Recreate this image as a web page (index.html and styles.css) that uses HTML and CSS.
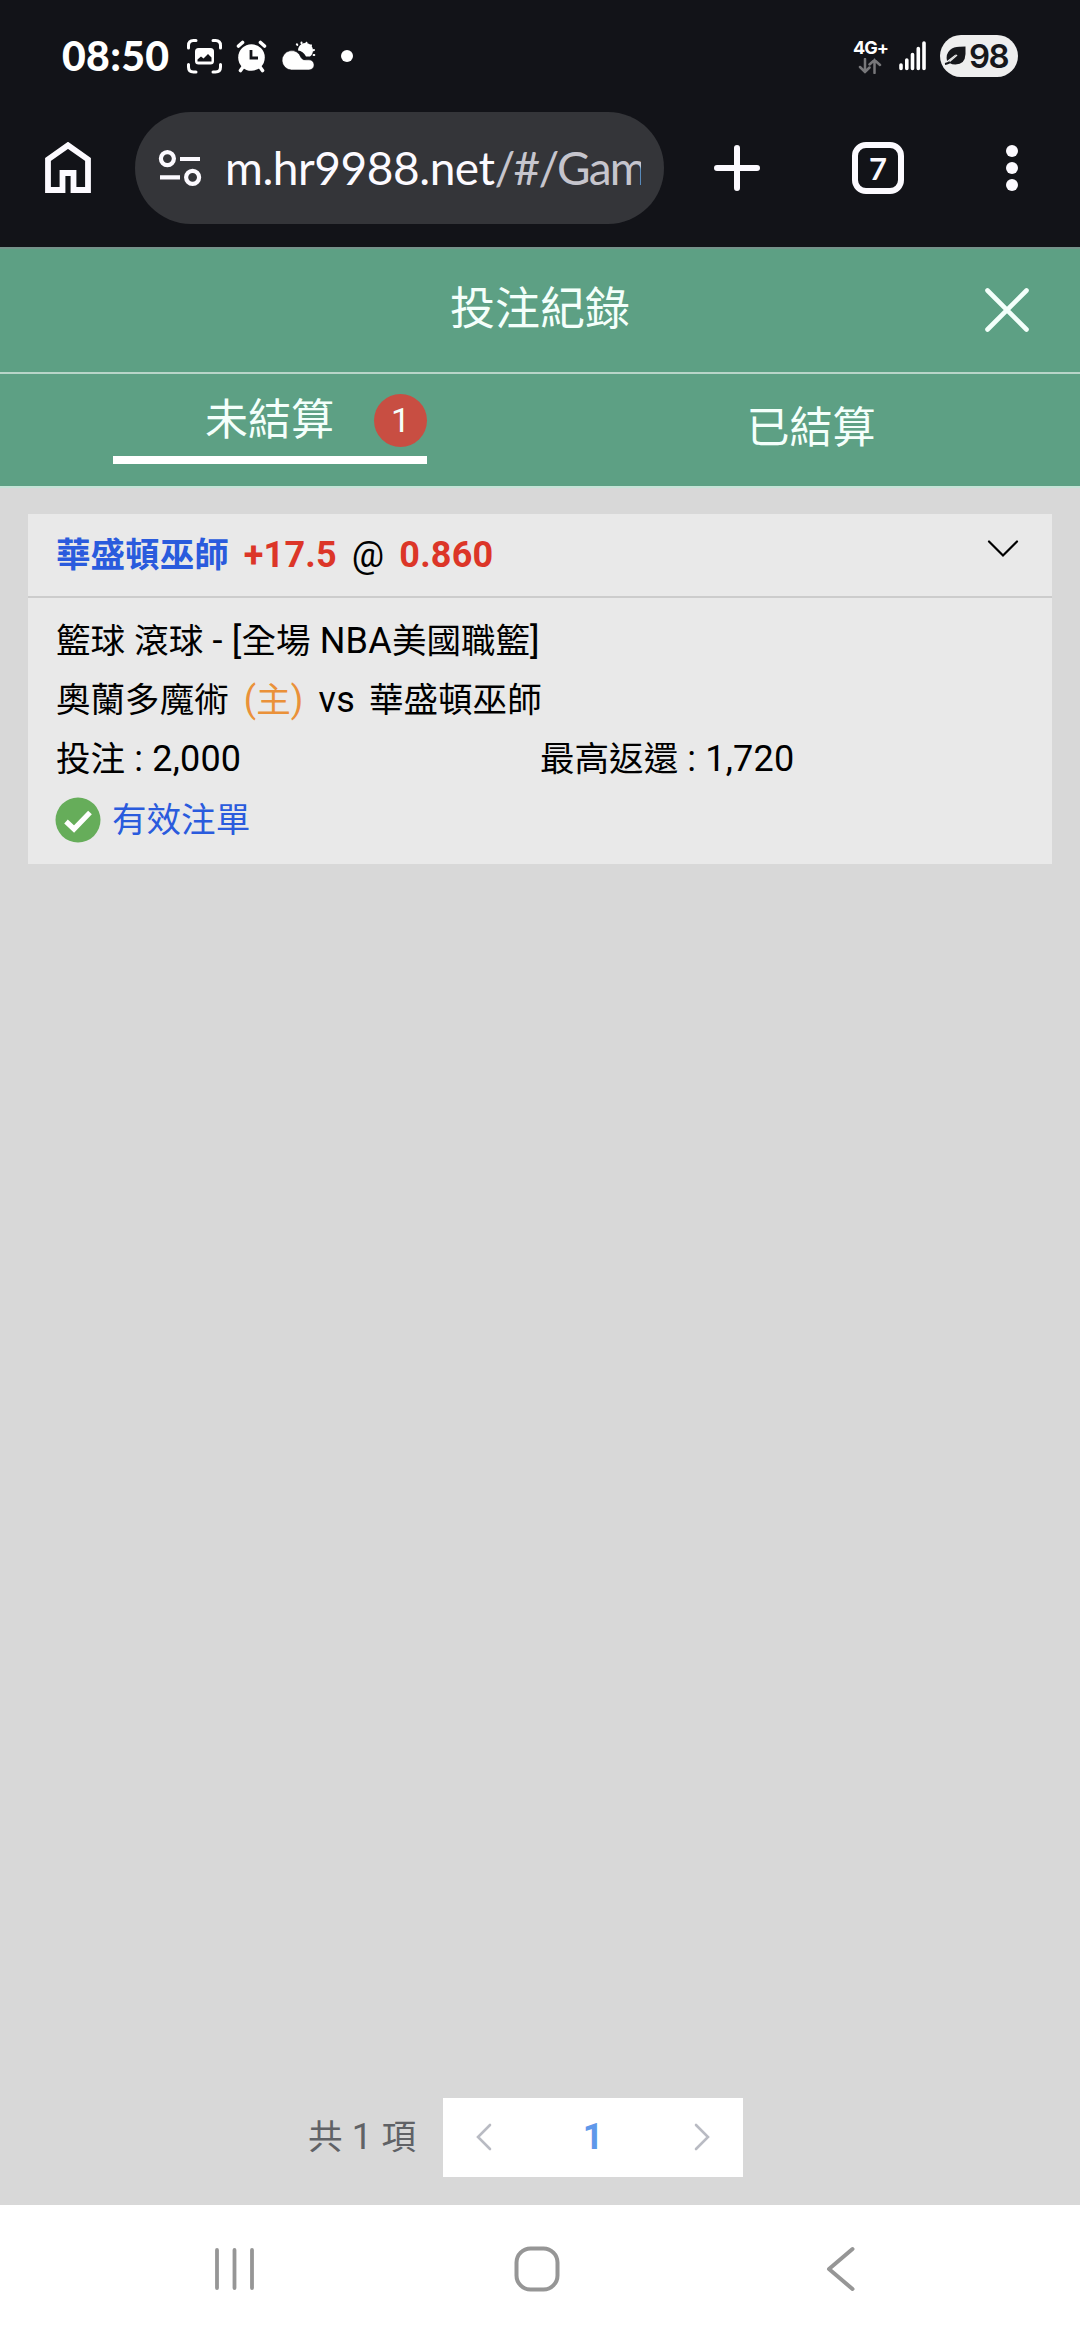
FILE: index.html
```html
<!DOCTYPE html>
<html lang="zh-Hant">
<head>
<meta charset="utf-8">
<title>投注紀錄</title>
<link rel="stylesheet" href="styles.css">
</head>
<body>
<div class="status-bar">
  <span class="clock">08:50</span>
  <svg class="status-icons" width="172" height="42" viewBox="184 35 172 42">
    <g fill="none" stroke="#fff" stroke-width="3" stroke-linecap="round">
      <path d="M188.500 48V45.500Q188.500 40.500 193.500 40.500H196M213 40.500H215.500Q220.500 40.500 220.500 45.500V48M220.500 64.500V67Q220.500 72 215.500 72H213M196 72H193.500Q188.500 72 188.500 67V64.500"/>
    </g>
    <rect x="195" y="48" width="19" height="16.500" rx="3.500" fill="#fff"/>
    <path d="M197.500 61.500V59.500L201 56.500L203.500 58.500L208 54L211.500 57.500V61.500Z" fill="#121318"/>
    <g stroke="#fff" stroke-width="3.600" stroke-linecap="round">
      <path d="M238.500 46L242.500 42.500M264.500 46L260.500 42.500M243 67L240.500 70.500M260 67L262.500 70.500"/>
    </g>
    <circle cx="251.500" cy="57.500" r="13.300" fill="#fff"/>
    <path d="M251 50V58H258" fill="none" stroke="#121318" stroke-width="2.800"/>
    <path d="M298 50.500A7.500 7.500 0 1 1 310 56.500H306Q303 51 298 50.500Z" fill="#fff"/>
    <g stroke="#fff" stroke-width="2" stroke-linecap="round"><path d="M296.800 44.200L297.300 44.900M301.500 42.500V43.200M306.500 42.700L306.300 43.400M311 45.300L310.500 45.900M314 50L313.300 50.300M314.300 55H313.600"/></g>
    <path d="M291.500 70A9.700 9.700 0 1 1 301 57.500Q302.500 60.500 306 59.800H309A5.100 5.100 0 0 1 309 70Z" fill="#fff" stroke="#121318" stroke-width=".6"/>
    <circle cx="347" cy="56" r="6" fill="#fff"/>
  </svg>
  <div class="network">
    <span class="network-type">4G+</span>
    <svg width="26" height="16" viewBox="0 0 26 16"><path d="M8 1V14M3 9L8 14L12.500 9.500M17.500 15V2M12.500 6.500L17.500 2L23 7" fill="none" stroke="#77777a" stroke-width="2.500" stroke-linecap="round"/></svg>
  </div>
  <svg class="signal" width="28" height="32" viewBox="898 40 28 32"><path d="M901 65V68.500M906.800 60V68.500M912.500 54.500V68.500M918.300 48.500V68.500M924 43V68.500" stroke="#fff" stroke-width="3.600" stroke-linecap="round"/></svg>
  <div class="battery">
    <svg width="22" height="20" viewBox="944 46 22 20"><path d="M965.500 46.500V54Q965 64.500 955.500 64.500Q952 64.500 949.500 63L957 56L955.500 54.500L947 61Q945.500 54 950 50Q954 46.500 960 46.700Z" fill="#16171b"/><path d="M945 64Q949 63.500 952 60L957 55.500" fill="none" stroke="#16171b" stroke-width="2"/><path d="M949.500 61.500L957 55" stroke="#eee" stroke-width="1.500"/></svg>
    <span>98</span>
  </div>
</div>

<div class="browser-bar">
  <svg class="home" width="46" height="52" viewBox="45 143 46 52"><path d="M48 191V160.500L68 146.300L88 160.500V191H73.500V174H62.500V191Z" fill="none" stroke="#fcfaff" stroke-width="5.800"/></svg>
  <div class="url-box">
    <svg width="44" height="40" viewBox="158 148 44 40" fill="none" stroke="#fcfaff" stroke-width="4.200"><circle cx="167.400" cy="158.600" r="6.500"/><path d="M180 159H200M160 177.300H180"/><circle cx="192.600" cy="177.300" r="6.500"/></svg>
    <div class="url"><span class="host">m.hr9988.net</span><span class="path">/#/Gam</span></div>
  </div>
  <svg class="plus" width="46" height="46" viewBox="0 0 46 46"><path d="M3 23H43M23 3V43" stroke="#fcfaff" stroke-width="6" stroke-linecap="round"/></svg>
  <div class="tab-count">7</div>
  <svg class="more" width="12" height="48" viewBox="0 0 12 48" fill="#fcfaff"><circle cx="6" cy="7" r="6"/><circle cx="6" cy="24" r="6"/><circle cx="6" cy="41" r="6"/></svg>
</div>

<div class="page-title">
  <h1>投注紀錄</h1>
  <svg width="48" height="48" viewBox="0 0 48 48"><path d="M4.500 4.500L43.500 43.500M43.500 4.500L4.500 43.500" stroke="#f4fffb" stroke-width="4.600" stroke-linecap="round"/></svg>
</div>
<div class="tabs">
  <div class="tab"><div class="tab-active"><span class="tab-label">未結算</span><span class="badge">1</span></div></div>
  <div class="tab"><span>已結算</span></div>
</div>

<main class="content">
  <section class="bet">
    <div class="bet-head">
      <div class="pick"><b class="team zh">華盛頓巫師</b><b class="red line">+17.5</b><span class="at">@</span><b class="red">0.860</b></div>
      <svg width="34" height="20" viewBox="0 0 34 20"><path d="M3 2.500L17 16.500L31 2.500" fill="none" stroke="#000" stroke-width="2.200" stroke-linecap="round"/></svg>
    </div>
    <div class="bet-body">
      <div class="row"><span><span class="zh">籃球</span> <span class="zh">滾球</span> - [<span class="zh">全場</span> NBA<span class="zh">美國職籃</span>]</span></div>
      <div class="row teams"><span class="zh">奧蘭多魔術</span><span class="host-mark">(<span class="zh">主</span>)</span><span class="vs">vs</span><span class="zh">華盛頓巫師</span></div>
      <div class="row amounts"><span><span class="zh">投注</span> : 2,000</span><span><span class="zh">最高返還</span> : 1,720</span></div>
      <div class="row valid">
        <svg width="46" height="46" viewBox="0 0 46 46"><circle cx="23" cy="23" r="22.500" fill="#66ad5a"/><path d="M11 24.500L19 32L35 15.500" fill="none" stroke="#fff" stroke-width="5.200"/></svg>
        <span class="zh">有效注單</span>
      </div>
    </div>
  </section>
  <div class="pagination">
    <span class="total"><span class="zh">共</span> 1 <span class="zh">項</span></span>
    <div class="pager">
      <svg width="16" height="28" viewBox="0 0 16 28"><path d="M14 2L2 14L14 26" fill="none" stroke="#b9bbc3" stroke-width="2.600" stroke-linecap="round"/></svg>
      <b>1</b>
      <svg width="16" height="28" viewBox="0 0 16 28"><path d="M2 2L14 14L2 26" fill="none" stroke="#b9bbc3" stroke-width="2.600" stroke-linecap="round"/></svg>
    </div>
  </div>
</main>

<nav class="system-nav">
  <svg width="42" height="46" viewBox="0 0 42 46"><path d="M4 4V42M21.500 4V42M39 4V42" stroke="#969696" stroke-width="3.800" stroke-linecap="round"/></svg>
  <svg class="nav-home" width="46" height="46" viewBox="0 0 46 46"><rect x="2.500" y="2.500" width="41" height="41" rx="14" fill="none" stroke="#969696" stroke-width="4"/></svg>
  <svg width="30" height="46" viewBox="0 0 30 46"><path d="M26.500 3L3 23L26.500 43" fill="none" stroke="#969696" stroke-width="4" stroke-linecap="round" stroke-linejoin="round"/></svg>
</nav>
</body>
</html>
```
FILE: styles.css
```css
* { box-sizing: border-box; }
body {
  margin: 0;
  width: 1080px;
  height: 2340px;
  display: flex;
  flex-direction: column;
  overflow: hidden;
  background: #d8d8d8;
  font: 36px/1 Roboto, "Noto Sans CJK TC", sans-serif;
  color: #000;
}
svg { display: block; flex: none; }
.zh { font-size: .96em; letter-spacing: 0; }

.status-bar {
  height: 112px;
  padding-left: 62px;
  display: flex;
  align-items: center;
  background: #121318;
  color: #fff;
}
.clock { width: 122px; font: 900 41px/42px Lato, sans-serif; letter-spacing: .3px; white-space: nowrap; }
.network { width: 40px; margin-left: 494px; }
.network-type { display: block; font: 700 18px/20px Inter, sans-serif; letter-spacing: -1px; margin-left: 3px; }
.network svg { margin-left: 7px; }
.signal { margin-left: 8px; }
.battery {
  width: 78px;
  height: 42px;
  margin-left: 14px;
  padding-left: 4px;
  display: flex;
  align-items: center;
  gap: 3px;
  border-radius: 21px;
  background: #eee;
  color: #16171b;
  font: 600 33px/42px Inter, sans-serif;
  letter-spacing: -1.5px;
}

.browser-bar {
  height: 135px;
  padding: 0 62px 23px 45px;
  display: flex;
  align-items: center;
  background: #121318;
}
.url-box {
  width: 529px;
  height: 112px;
  margin-left: 44px;
  padding: 0 23px;
  display: flex;
  align-items: center;
  gap: 23px;
  border-radius: 56px;
  background: #343539;
}
.url {
  width: 416px;
  overflow: hidden;
  white-space: nowrap;
  font: 46px/60px Lato, sans-serif;
  letter-spacing: -.45px;
  color: #fcfaff;
}
.path { color: #c6c5cd; letter-spacing: -1.8px; }
.plus { margin-left: 50px; }
.tab-count {
  width: 52px;
  height: 52px;
  margin-left: 92px;
  border: 6px solid #fcfaff;
  border-radius: 14px;
  color: #fcfaff;
  text-align: center;
  font: 700 31px/41px Lato, sans-serif;
}
.more { margin-left: auto; }

.page-title {
  height: 127px;
  border-top: 2px solid #75928a;
  border-bottom: 2px solid #b9d5c9;
  padding: 0 49px 2px;
  display: grid;
  grid-template-columns: 48px 1fr 48px;
  align-items: center;
  background: #5da084;
  color: #f4fffb;
}
.page-title h1 { grid-column: 2; margin: 0; padding-top: 1px; text-align: center; font-size: 45px; font-weight: 400; line-height: 60px; }
.tabs {
  height: 114px;
  display: grid;
  grid-template-columns: 1fr 1fr;
  border-bottom: 2px solid #c5e3d7;
  background: #5da084;
  color: #f4fffb;
  font-size: 43px;
  line-height: 60px;
}
.tab { display: flex; justify-content: center; align-items: center; padding: 0 0 4px 2px; }
.tab:first-child { align-items: flex-start; padding: 0; }
.tab-active {
  width: 314px;
  height: 70px;
  margin-top: 20px;
  padding: 0 0 10px 92px;
  display: flex;
  align-items: center;
  justify-content: space-between;
  border-bottom: 8px solid #fff;
}
.badge {
  width: 53px;
  height: 53px;
  border-radius: 50%;
  background: #c84e42;
  text-align: center;
  font-size: 34px;
  line-height: 52px;
}

.content {
  flex: 1;
  padding: 26px 28px 28px;
  display: flex;
  flex-direction: column;
  justify-content: space-between;
}
.bet { height: 350px; background: #e9e9e9; letter-spacing: .2px; }
.bet-head {
  height: 84px;
  padding: 0 32px 0 28px;
  display: flex;
  justify-content: space-between;
  border-bottom: 2px solid #ccc;
}
.bet-head svg { margin-top: 25px; }
.pick { display: flex; align-items: baseline; line-height: 82px; }
.team { font-weight: 700; color: #2a5bdd; }
.line { margin-left: 15px; }
.at { margin: 0 15px 0 15px; }
.red { color: #dc3628; }
.bet-body { padding: 14px 28px 0; }
.row { height: 59px; display: flex; align-items: baseline; line-height: 59px; white-space: nowrap; }
.host-mark { margin-left: 15px; color: #ea9139; }
.vs { margin: 0 14px 0 15px; }
.amounts > span { width: 484px; flex: none; }
.valid { height: 62px; line-height: 62px; align-items: center; gap: 11px; color: #2a5bdd; }
.valid svg { margin-left: -1px; }

.pagination { height: 79px; padding-left: 280px; display: flex; align-items: center; color: #606266; }
.total { width: 135px; padding-bottom: 2px; white-space: nowrap; letter-spacing: .3px; }
.pager {
  width: 300px;
  height: 79px;
  padding: 0 33px 2px;
  display: flex;
  align-items: center;
  justify-content: space-between;
  background: #fff;
}
.pager b { color: #5f98ea; font: 700 36px/40px Roboto, sans-serif; }

.system-nav {
  height: 135px;
  padding: 0 224px 8px 213px;
  display: flex;
  align-items: center;
  justify-content: space-between;
  background: #fff;
}
.nav-home { margin-right: 7px; }
```
